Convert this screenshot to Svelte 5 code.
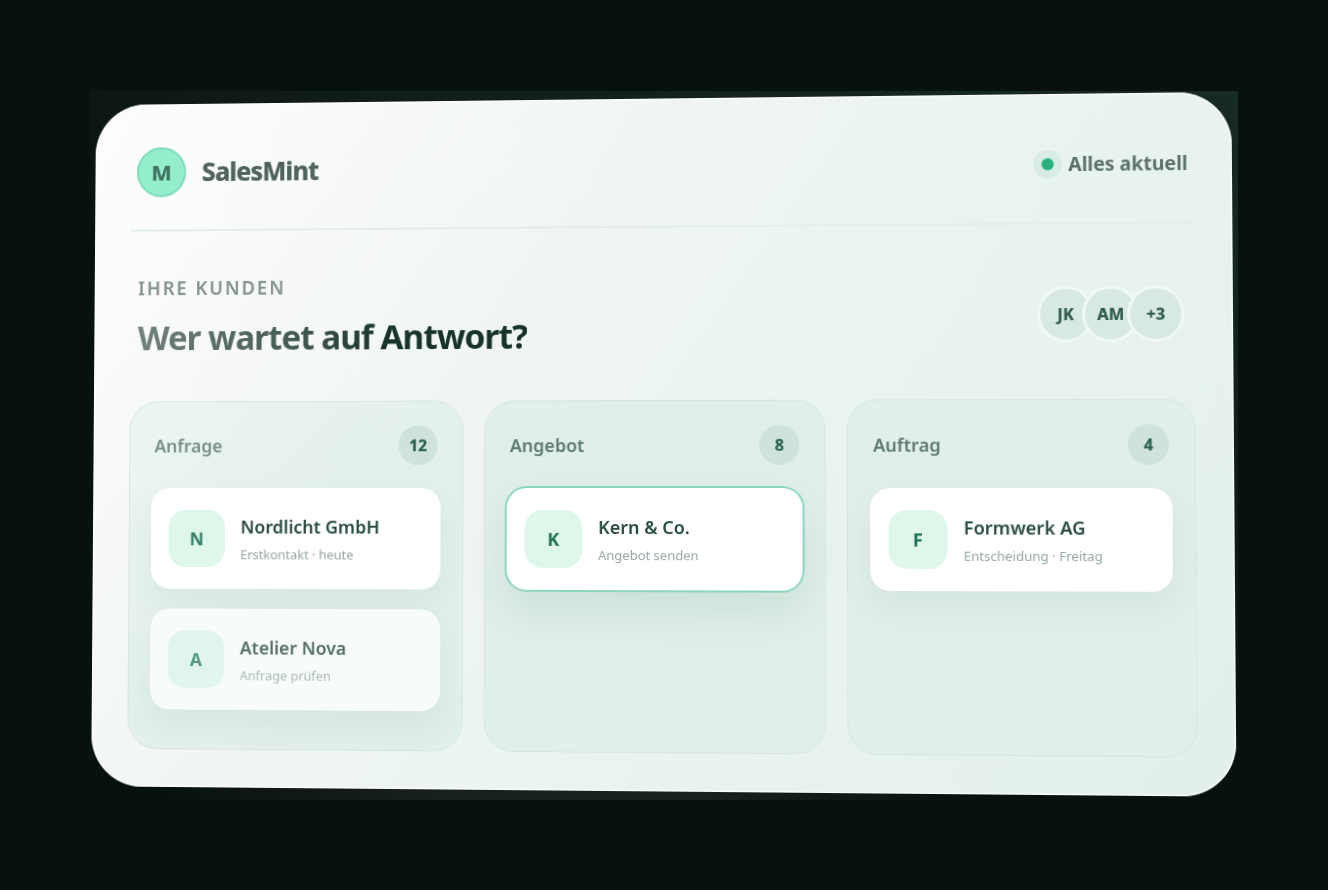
<script>
  const team = ['JK', 'AM', '+3'];

  const columns = [
    {
      title: 'Anfrage',
      count: 12,
      tone: 'soft',
      deals: [
        { initial: 'N', name: 'Nordlicht GmbH', note: 'Erstkontakt · heute' },
        { initial: 'A', name: 'Atelier Nova', note: 'Anfrage prüfen', faded: true }
      ]
    },
    {
      title: 'Angebot',
      count: 8,
      deals: [{ initial: 'K', name: 'Kern & Co.', note: 'Angebot senden', active: true }]
    },
    {
      title: 'Auftrag',
      count: 4,
      deals: [{ initial: 'F', name: 'Formwerk AG', note: 'Entscheidung · Freitag' }]
    }
  ];
</script>

<main class="page">
  <div class="stage">
    <div class="panel">
      <header class="topbar">
        <div class="brand">
          <span class="logo">M</span>
          <span class="brand-name">SalesMint</span>
        </div>
        <div class="status"><span class="dot"></span>Alles aktuell</div>
      </header>

      <div class="intro">
        <div>
          <p class="eyebrow">IHRE KUNDEN</p>
          <h1>Wer wartet auf Antwort?</h1>
        </div>
        <ul class="team">
          {#each team as member}
            <li>{member}</li>
          {/each}
        </ul>
      </div>

      <div class="board">
        {#each columns as column}
          <section class="column" class:soft={column.tone === 'soft'}>
            <div class="column-head">
              <h2>{column.title}</h2>
              <span class="count">{column.count}</span>
            </div>
            {#each column.deals as deal}
              <article class="deal" class:active={deal.active} class:faded={deal.faded}>
                <span class="initial">{deal.initial}</span>
                <div class="deal-text">
                  <h3>{deal.name}</h3>
                  <p>{deal.note}</p>
                </div>
              </article>
            {/each}
          </section>
        {/each}
      </div>
    </div>
  </div>
</main>

<style>
  :global(body) {
    margin: 0;
    background: #07110f;
  }

  .page {
    box-sizing: border-box;
    min-height: 100vh;
    padding: 90px;
    display: flex;
    align-items: center;
    font-family: 'Noto Sans', 'Open Sans', sans-serif;
    color: #2b4a41;
  }

  .stage {
    flex: 1;
    padding: 8px 3px;
    perspective: 1800px;
    background:
      radial-gradient(ellipse 36% 24% at 42% 100%, #19211c 30%, transparent),
      linear-gradient(25deg, #07110f 0%, #07110f 45%, #101c18 65%, #182a24 100%);
  }

  .panel {
    box-sizing: border-box;
    padding: 0 37px 38px;
    border-radius: 52px;
    outline: 1px solid transparent;
    background: linear-gradient(125deg, #fdfdfd 0%, #f9fafa 14%, #f0f5f4 36%, #eaf4ef 58%, #e7f2ed 78%, #e2efe8 100%);
    box-shadow: inset 0 0 2px 1px #ffffff;
    transform: translate(-10px, -2px) rotateX(1.3deg) rotateY(-3.1deg);
    will-change: transform;
  }

  .topbar {
    display: flex;
    align-items: center;
    justify-content: space-between;
    height: 128px;
    padding: 0 6px;
    border-bottom: 2px solid #e3edeb;
  }

  .brand {
    display: flex;
    align-items: center;
    gap: 16px;
    padding-top: 10px;
  }

  .logo {
    box-sizing: border-box;
    display: grid;
    place-items: center;
    width: 51px;
    height: 51px;
    border: 2px solid #82dcbb;
    border-radius: 50%;
    background: #94eecb;
    color: #437362;
    font-size: 22px;
    font-weight: 800;
  }

  .brand-name {
    color: #50645d;
    font-size: 26px;
    font-weight: 800;
    letter-spacing: -1px;
  }

  .status {
    display: flex;
    align-items: center;
    gap: 14px;
    padding-top: 12px;
    color: #5b716a;
    font-size: 19px;
    font-weight: 700;
  }

  .dot {
    width: 12px;
    height: 12px;
    border-radius: 50%;
    background: #27b17f;
    box-shadow: 0 0 0 8px #d9ece4;
  }

  .intro {
    display: flex;
    align-items: center;
    justify-content: space-between;
    padding: 45px 10px 40px 8px;
  }

  .eyebrow {
    margin: 0 0 12px;
    color: #84948e;
    font-size: 19px;
    font-weight: 600;
    line-height: 26px;
    letter-spacing: 2px;
  }

  h1 {
    margin: 0;
    background: linear-gradient(90deg, #71827c 0%, #455c54 40%, #17332b 64%, #17332b 100%);
    background-clip: text;
    -webkit-background-clip: text;
    color: transparent;
    font-size: 34px;
    font-weight: 700;
    line-height: 50px;
    letter-spacing: -1px;
  }

  .team {
    display: flex;
    margin: 0;
    padding: 0;
    list-style: none;
  }

  .team li {
    box-sizing: border-box;
    display: grid;
    place-items: center;
    width: 56px;
    height: 56px;
    border: 3px solid #f0f8f5;
    border-radius: 50%;
    background: #d8e8e2;
    color: #315c4e;
    font-size: 16px;
    font-weight: 800;
  }

  .team li + li {
    margin-left: -12px;
  }

  .board {
    display: grid;
    grid-template-columns: repeat(3, 1fr);
    gap: 21px;
  }

  .column {
    display: flex;
    flex-direction: column;
    gap: 20px;
    min-height: 302px;
    padding: 24px 22px;
    border: 1px solid #d6e6e0;
    border-radius: 30px;
    background: #e1efe9;
  }

  .column.soft {
    background: linear-gradient(135deg, #ecf5f2, #e4f0ec 45%, #e1efe9);
  }

  .column-head {
    display: flex;
    align-items: center;
    justify-content: space-between;
    height: 40px;
    padding: 0 3px 3px;
  }

  h2 {
    margin: 0;
    color: #5e7a70;
    font-size: 18px;
    font-weight: 600;
  }

  .soft h2 {
    color: #7a9087;
  }

  .count {
    display: grid;
    place-items: center;
    width: 40px;
    height: 40px;
    border-radius: 50%;
    background: #d0e3db;
    color: #2e6552;
    font-size: 16px;
    font-weight: 800;
  }

  .deal {
    display: flex;
    align-items: center;
    gap: 16px;
    height: 102px;
    padding: 0 18px;
    border-radius: 20px;
    background: #ffffff;
    box-shadow: 0 16px 32px rgba(40, 110, 85, 0.07);
  }

  .deal.active {
    box-shadow:
      0 0 0 2px #8ed6ba,
      0 20px 40px rgba(40, 120, 90, 0.12);
  }

  .deal.faded {
    background: #f7fbfa;
  }

  .deal-text {
    padding-top: 4px;
  }

  .initial {
    display: grid;
    place-items: center;
    width: 58px;
    height: 58px;
    border-radius: 18px;
    background: #dff6eb;
    color: #1d6e52;
    font-size: 18px;
    font-weight: 700;
  }

  .soft .initial {
    color: #36806a;
  }

  .faded .initial {
    background: #e1f5ed;
    color: #579983;
  }

  h3 {
    margin: 0;
    color: #2a4c41;
    font-size: 18px;
    font-weight: 600;
    line-height: 28px;
  }

  .faded h3 {
    color: #567068;
  }

  .deal p {
    margin: 0;
    color: #96a8a1;
    font-size: 13px;
    line-height: 28px;
  }

  .deal.faded p {
    color: #abbab5;
  }
</style>
